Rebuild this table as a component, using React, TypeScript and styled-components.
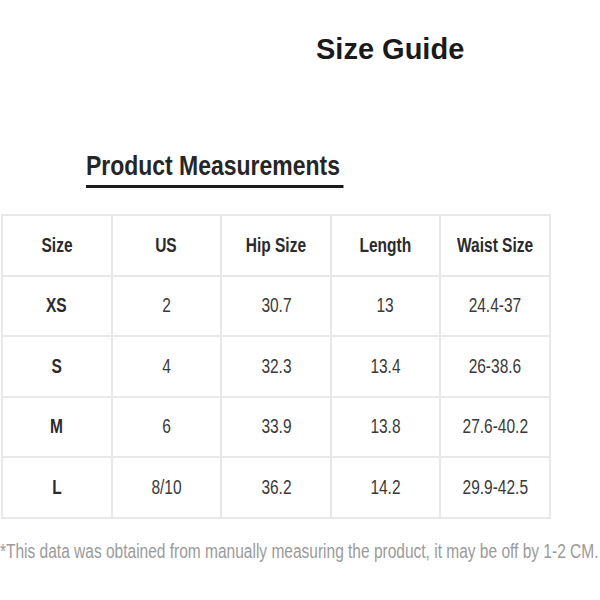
import React from "react";
import styled, { createGlobalStyle } from "styled-components";

const Global = createGlobalStyle`
  html, body { margin: 0; padding: 0; background: #fff; }
  body { width: 600px; height: 600px; overflow: hidden; }
`;

const SANS = `"Liberation Sans", Arial, sans-serif`;
const SQUEEZE = 0.775;

const Page = styled.div`
  display: flex;
  flex-direction: column;
  width: 600px;
`;

const Title = styled.h1`
  margin: 35px 0 0 316px;
  font-family: ${SANS};
  font-weight: 700;
  font-size: 29px;
  line-height: 29px;
  color: #1a1a1a;
`;

const Subtitle = styled.h2`
  align-self: flex-start;
  margin: 88px 0 0 86px;
  padding: 0 4px 5px 0;
  border-bottom: 3px solid #1a1a1a;
  font-family: ${SANS};
  font-weight: 700;
  font-size: 28px;
  line-height: 28px;
  color: #262626;
  transform: scaleX(0.82);
  transform-origin: left center;
`;

const Table = styled.table`
  margin: 26px 0 0 1px;
  width: 550px;
  border-collapse: collapse;
  table-layout: fixed;
  font-family: ${SANS};
`;

const HeadCell = styled.th`
  height: 58.5px;
  padding: 0;
  border: 2px solid #e8e8e8;
  font-weight: 700;
  font-size: 20px;
  color: #2b2b2b;
  text-align: center;
`;

const Cell = styled.td<{ $bold?: boolean }>`
  height: 58.5px;
  padding: 0;
  border: 2px solid #e8e8e8;
  font-weight: ${(p) => (p.$bold ? 700 : 400)};
  font-size: 20px;
  color: ${(p) => (p.$bold ? "#2b2b2b" : "#3a3a3a")};
  text-align: center;
`;

const Narrow = styled.span`
  display: inline-block;
  white-space: nowrap;
  transform: scaleX(${SQUEEZE});
  transform-origin: center center;
`;

const Note = styled.p`
  align-self: flex-start;
  width: max-content;
  margin: 21px 0 0 0;
  font-family: ${SANS};
  font-size: 20px;
  line-height: 23px;
  color: #9a9a9a;
  white-space: nowrap;
  transform: scaleX(${SQUEEZE});
  transform-origin: left center;
`;

const headers = ["Size", "US", "Hip Size", "Length", "Waist Size"];
const rows = [
  ["XS", "2", "30.7", "13", "24.4-37"],
  ["S", "4", "32.3", "13.4", "26-38.6"],
  ["M", "6", "33.9", "13.8", "27.6-40.2"],
  ["L", "8/10", "36.2", "14.2", "29.9-42.5"],
];

export default function App() {
  return (
    <>
      <Global />
      <Page>
        <Title>Size Guide</Title>
        <Subtitle>Product Measurements</Subtitle>
        <Table>
          <thead>
            <tr>
              {headers.map((h) => (
                <HeadCell key={h}>
                  <Narrow>{h}</Narrow>
                </HeadCell>
              ))}
            </tr>
          </thead>
          <tbody>
            {rows.map((r) => (
              <tr key={r[0]}>
                {r.map((c, i) => (
                  <Cell key={i} $bold={i === 0}>
                    <Narrow>{c}</Narrow>
                  </Cell>
                ))}
              </tr>
            ))}
          </tbody>
        </Table>
        <Note>*This data was obtained from manually measuring the product, it may be off by 1-2 CM.</Note>
      </Page>
    </>
  );
}
